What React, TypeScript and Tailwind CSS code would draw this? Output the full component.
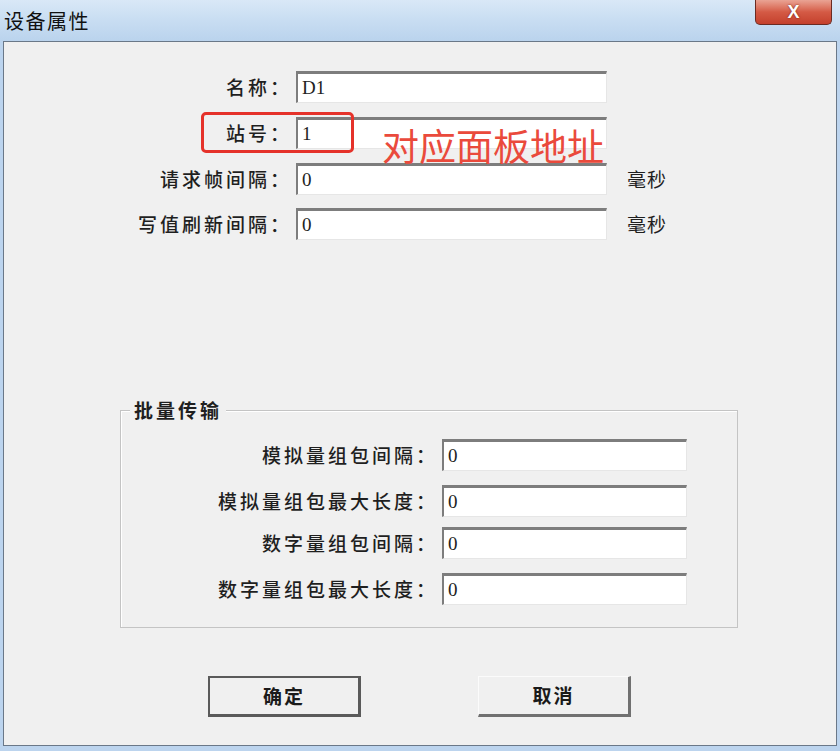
import React from 'react';

const cjk = { fontFamily: '"Noto Sans CJK SC", "Noto Sans", sans-serif' };
const val = { fontFamily: '"Liberation Serif", "DejaVu Serif", serif' };

interface FieldProps {
  label: string;
  value: string;
  labelWidth: string;
  inputWidth: string;
  unit?: boolean;
  className?: string;
}

const TextBox = ({ value, width }: { value: string; width: string }) => (
  <div
    className={`${width} h-[32px] bg-white border-t-[3px] border-l-2 border-r border-b border-t-[#7d7d7d] border-l-[#7d7d7d] border-r-[#e6e6e6] border-b-[#e6e6e6] flex items-center pl-[4px] text-[19px] text-[#222]`}
    style={val}
  >
    {value}
  </div>
);

const Field = ({ label, value, labelWidth, inputWidth, unit, className }: FieldProps) => (
  <div className={`flex items-center ${className ?? ''}`}>
    <div className={`${labelWidth} text-right text-[19px] tracking-[3px] text-[#1f1f1f] font-medium pr-[4px]`}>
      {label}
    </div>
    <TextBox value={value} width={inputWidth} />
    {unit && <span className="ml-[20px] text-[19px] tracking-[1px] text-[#1f1f1f]">毫秒</span>}
  </div>
);

const Button = ({ children, isDefault }: { children: React.ReactNode; isDefault?: boolean }) => (
  <button
    className={`w-[153px] h-[41px] bg-[#f0f0f0] text-[19px] tracking-[2px] font-bold text-[#1a1a1a] ${
      isDefault
        ? 'border-2 border-[#5a5a5a] border-b-[3px] border-r-[3px]'
        : 'border border-t-[#fbfbfb] border-l-[#fbfbfb] border-r-[3px] border-b-[3px] border-r-[#707070] border-b-[#707070]'
    }`}
    style={cjk}
  >
    {children}
  </button>
);

export default function App() {
  return (
    <div className="w-[840px] h-[751px] bg-[#bcd4ee] flex flex-col overflow-hidden" style={cjk}>
      {/* title bar */}
      <div className="h-[41px] flex items-start justify-between bg-gradient-to-b from-[#d9e8f7] via-[#c8ddf2] to-[#bad3ed]">
        <span className="mt-[6px] ml-[4px] text-[20px] tracking-[1.5px] text-[#111]">设备属性</span>
        <div className="mr-[8px] w-[77px] h-[25px] rounded-b-[5px] border border-t-0 border-[#6b2b22] bg-gradient-to-b from-[#e9a394] via-[#d45a45] to-[#c4402c] flex items-center justify-center">
          <span className="text-white font-bold text-[18px] leading-none" style={{ fontFamily: '"Liberation Sans", sans-serif', textShadow: '0 0 2px #6b1a10' }}>X</span>
        </div>
      </div>

      {/* client area */}
      <div className="relative mx-[3px] mb-[5px] flex-1 border border-[#6a7888] bg-[#f0f0f0] flex flex-col">
        <div className="pt-[29px] flex flex-col">
          <Field label="名称：" value="D1" labelWidth="w-[292px]" inputWidth="w-[311px]" />
          <Field label="站号：" value="1" labelWidth="w-[292px]" inputWidth="w-[311px]" className="mt-[14px]" />
          <Field label="请求帧间隔：" value="0" labelWidth="w-[292px]" inputWidth="w-[311px]" unit className="mt-[14px]" />
          <Field label="写值刷新间隔：" value="0" labelWidth="w-[292px]" inputWidth="w-[311px]" unit className="mt-[13px]" />
        </div>

        {/* group box */}
        <div className="relative ml-[116px] mt-[170px] w-[618px] h-[218px] border border-[#c4c4c4] shadow-[inset_1px_1px_0_#ffffff]">
          <span className="absolute -top-[13px] left-[9px] px-[4px] bg-[#f0f0f0] text-[19px] tracking-[3px] font-bold text-[#1f1f1f] leading-[24px]">
            批量传输
          </span>
          <div className="pt-[28px] flex flex-col">
            <Field label="模拟量组包间隔：" value="0" labelWidth="w-[321px]" inputWidth="w-[245px]" />
            <Field label="模拟量组包最大长度：" value="0" labelWidth="w-[321px]" inputWidth="w-[245px]" className="mt-[14px]" />
            <Field label="数字量组包间隔：" value="0" labelWidth="w-[321px]" inputWidth="w-[245px]" className="mt-[10px]" />
            <Field label="数字量组包最大长度：" value="0" labelWidth="w-[321px]" inputWidth="w-[245px]" className="mt-[14px]" />
          </div>
        </div>

        {/* buttons */}
        <div className="ml-[204px] mt-[48px] flex gap-[117px]">
          <Button isDefault>确定</Button>
          <Button>取消</Button>
        </div>

        {/* annotation overlay */}
        <div className="absolute left-[197px] top-[70px] w-[153px] h-[41px] border-[3px] border-[#e5322a] rounded-[5px]" />
        <span className="absolute left-[378px] top-[81px] text-[37px] leading-[44px] text-[#ea4a3c] tracking-[0px]">
          对应面板地址
        </span>
      </div>
    </div>
  );
}
